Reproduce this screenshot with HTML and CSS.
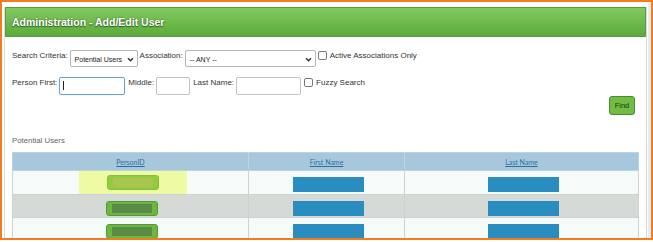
FILE: index.html
```html
<!DOCTYPE html>
<html lang="en">
<head>
    <meta charset="UTF-8">
    <title>Administration - Add/Edit User</title>
    <link rel="stylesheet" href="styles.css">
</head>
<body>
    <div class="frame">
        <div class="panel">
            <div class="panel-header">Administration - Add/Edit User</div>

            <div class="panel-body">
                <!-- Criterios de busqueda -->
                <div class="form-row">
                    <label>Search Criteria:</label>
                    <div class="select select-criteria">
                        <span>Potential Users</span>
                        <svg width="7" height="5" viewBox="0 0 8 6"><path d="M1 1.5 L4 4.5 L7 1.5" fill="none" stroke="#333" stroke-width="1.8"/></svg>
                    </div>
                    <label>Association:</label>
                    <div class="select select-assoc">
                        <span>-- ANY --</span>
                        <svg width="7" height="5" viewBox="0 0 8 6"><path d="M1 1.5 L4 4.5 L7 1.5" fill="none" stroke="#333" stroke-width="1.8"/></svg>
                    </div>
                    <span class="check"></span>
                    <label>Active Associations Only</label>
                </div>

                <div class="form-row">
                    <label>Person First:</label>
                    <div class="input input-first focused"><span class="caret"></span></div>
                    <label>Middle:</label>
                    <div class="input input-middle"></div>
                    <label>Last Name:</label>
                    <div class="input input-last"></div>
                    <span class="check"></span>
                    <label>Fuzzy Search</label>
                </div>

                <div class="actions">
                    <button class="find-btn">Find</button>
                </div>

                <div class="results-title">Potential Users</div>

                <table class="results">
                    <colgroup>
                        <col class="col-id">
                        <col class="col-first">
                        <col class="col-last">
                    </colgroup>
                    <thead>
                        <tr>
                            <th><a href="#">PersonID</a></th>
                            <th><a href="#">First Name</a></th>
                            <th><a href="#">Last Name</a></th>
                        </tr>
                    </thead>
                    <tbody>
                        <tr>
                            <td><div class="highlight"><span class="id-btn active"><span></span></span></div></td>
                            <td><span class="redacted"></span></td>
                            <td><span class="redacted"></span></td>
                        </tr>
                        <tr class="alt">
                            <td><span class="id-btn"><span></span></span></td>
                            <td><span class="redacted"></span></td>
                            <td><span class="redacted"></span></td>
                        </tr>
                        <tr>
                            <td><span class="id-btn"><span></span></span></td>
                            <td><span class="redacted"></span></td>
                            <td><span class="redacted"></span></td>
                        </tr>
                    </tbody>
                </table>
            </div>
        </div>
    </div>
</body>
</html>
```

FILE: styles.css
```css
/* Marco general */
body {
    margin: 0;
    background: #fff;
    font-family: "Liberation Sans", Arial, sans-serif;
}
.frame {
    width: 653px;
    height: 240px;
    box-sizing: border-box;
    border: 2px solid #f27d1e;
    padding: 5px 4px 0 2px;
    overflow: hidden;
    background: #fff;
    box-shadow: inset -3px 0 0 #e3edf3;
}
.panel {
    border-left: 1px solid #d3e0e8;
    border-right: 1px solid #cfdbe3;
    height: 240px;
}
.panel-header {
    height: 28px;
    line-height: 28px;
    padding-left: 6px;
    background: linear-gradient(#84c95e, #5aab3a);
    border: 1px solid #5b9c44;
    color: #fff;
    font-size: 10.5px;
    font-weight: bold;
    text-shadow: 0 1px 1px #2d5a20, 0 0 2px #3a6a2a;
}

/* Formulario */
.panel-body {
    padding: 13px 0 0 7px;
}
.form-row {
    display: flex;
    align-items: center;
    height: 17px;
    margin-bottom: 10px;
    font-size: 8px;
    color: #333;
}
.form-row label {
    margin-right: 2px;
    position: relative;
    top: -3px;
}
.select {
    display: flex;
    align-items: center;
    justify-content: space-between;
    box-sizing: border-box;
    height: 17px;
    margin-right: 2px;
    padding: 1px 3px 0 4px;
    border: 1px solid #b5b5b5;
    border-radius: 2px;
    font-size: 7px;
    color: #222;
}
.select-criteria {
    width: 68px;
}
.select-assoc {
    width: 131px;
}
.check {
    display: inline-block;
    box-sizing: border-box;
    width: 9px;
    height: 9px;
    margin-right: 3px;
    border: 1px solid #777;
    border-radius: 2px;
    position: relative;
    top: -3px;
}
.input {
    box-sizing: border-box;
    height: 18px;
    margin-right: 3px;
    border: 1px solid #c3c3c3;
    border-radius: 2px;
}
.input-first {
    width: 66px;
}
.input-middle {
    width: 34px;
}
.input-last {
    width: 65px;
}
.input.focused {
    border: 1px solid #6e9fd2;
    box-shadow: 0 0 1px #9fc2e6;
}
.caret {
    display: block;
    width: 1px;
    height: 9px;
    margin: 3px 0 0 3px;
    background: #222;
}
.actions {
    display: flex;
    justify-content: flex-end;
    margin: -8px 11px 0 0;
}
.find-btn {
    width: 26px;
    height: 19px;
    padding: 0;
    background: #6fbd44;
    border: 1px solid #4b8a2e;
    border-radius: 3px;
    font-family: "Liberation Sans", Arial, sans-serif;
    font-size: 7.5px;
    color: #1e3a12;
}
.results-title {
    margin-top: 21px;
    font-size: 7.8px;
    color: #666;
}

/* Tabla de resultados */
.results {
    margin-top: 7px;
    width: 626px;
    border-collapse: collapse;
    table-layout: fixed;
    font-family: "Lato", "Liberation Sans", sans-serif;
}
.col-id {
    width: 236px;
}
.col-first {
    width: 156px;
}
.col-last {
    width: 234px;
}
.results th {
    height: 17px;
    padding: 0;
    background: #a7c8dc;
    border: 1px solid #bdd3e0;
    font-size: 7px;
    font-weight: normal;
}
.results th a {
    color: #2d6da6;
}
.results td {
    height: 22px;
    padding: 0;
    text-align: center;
    vertical-align: middle;
    background: #f5fbf8;
    border: 1px solid #cdd3d0;
}
.results tr.alt td {
    background: #d6dad7;
}
.highlight {
    display: flex;
    align-items: center;
    justify-content: center;
    width: 108px;
    height: 23px;
    margin: 0 auto;
    position: relative;
    left: 2px;
    background: #eefba4;
}
.id-btn {
    display: inline-flex;
    align-items: center;
    justify-content: center;
    box-sizing: border-box;
    width: 52px;
    height: 15px;
    vertical-align: middle;
    position: relative;
    left: 1px;
    background: #6cb83c;
    border: 1px solid #55993a;
    border-radius: 3px;
}
.id-btn span {
    width: 40px;
    height: 9px;
    background: #5b8b49;
}
.id-btn.active {
    background: #93cb3e;
    border-color: #86c03a;
    left: 0;
}
.id-btn.active span {
    background: #a9c64f;
}
.redacted {
    display: inline-block;
    width: 71px;
    height: 15px;
    vertical-align: middle;
    position: relative;
    left: 2px;
    background: #2a8dbf;
}
```
